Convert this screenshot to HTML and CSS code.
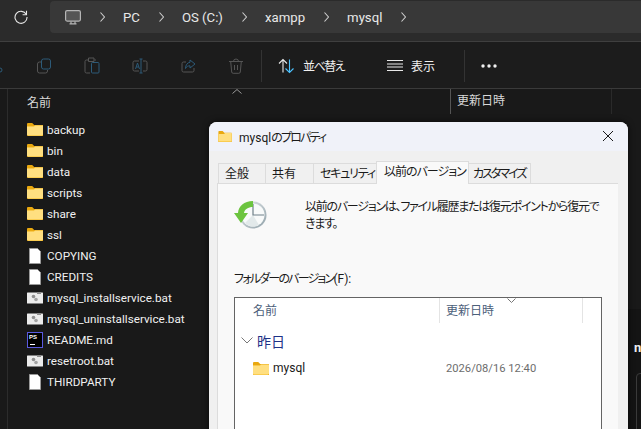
FILE: index.html
```html
<!DOCTYPE html>
<html lang="ja">
  <head>
    <meta charset="UTF-8" />
    <title>mysql</title>
    <link rel="stylesheet" href="styles.css">
  </head>
  <body>
    <svg class="defs" width="0" height="0">
      <symbol id="folder" viewBox="0 0 16 13">
        <path d="M0 1.2C0 .5.5 0 1.2 0h4l2 2H16v11H1.2C.5 13 0 12.500 0 11.800z" fill="#e9a80f"/>
        <path d="M0 3.500h16v8.300c0 .7-.5 1.200-1.200 1.200H1.200C.5 13 0 12.500 0 11.800z" fill="#f5b921"/>
        <path d="M0 3.500h7l1-1h8v8.800c0 .7-.5 1.200-1.200 1.200H1.200C.5 12.500 0 12 0 11.300z" fill="#ffdf80"/>
      </symbol>
      <symbol id="doc" viewBox="0 0 12 16">
        <path d="M.5.500h8l3 3v12H.5z" fill="#fff" stroke="#9a9a9a"/>
      </symbol>
      <symbol id="bat" viewBox="0 0 16 12">
        <rect width="16" height="11" y=".5" rx=".5" fill="#ececec"/>
        <rect x="10" width="4" height="2" y="0" fill="#8c8c8c"/>
        <circle cx="6.500" cy="4.500" r="1.800" fill="#8f8f8f"/>
        <circle cx="9" cy="7.500" r="1.800" fill="#a3a3a3"/>
      </symbol>
      <symbol id="chevron" viewBox="0 0 5 10">
        <path d="M.5.500L4.500 5 .5 9.500" fill="none" stroke="#cfcfcf" stroke-width="1.100"/>
      </symbol>
    </svg>

    <div class="explorer">
      <div class="address-strip">
        <svg class="refresh" width="14" height="14" viewBox="0 0 14 14" fill="none" stroke="#e8e8e8" stroke-width="1.100">
          <path d="M12.300 4.500A6 6 0 1 0 13 7"/>
          <path d="M12.500 .8v3.900H8.600"/>
        </svg>
        <div class="crumbs">
          <svg class="pc-icon" width="16" height="15" viewBox="0 0 16 15" fill="none" stroke="#b5b5b5" stroke-width="1.200">
            <rect x=".6" y=".6" width="14.800" height="10.500" rx="1.500" fill="#555"/>
            <path d="M4.500 13.800h7M6 11.500v2M10 11.500v2"/>
          </svg>
          <svg class="sep" width="5" height="10"><use href="#chevron"/></svg>
          <span>PC</span>
          <svg class="sep" width="5" height="10"><use href="#chevron"/></svg>
          <span>OS (C:)</span>
          <svg class="sep" width="5" height="10"><use href="#chevron"/></svg>
          <span>xampp</span>
          <svg class="sep" width="5" height="10"><use href="#chevron"/></svg>
          <span>mysql</span>
          <svg class="sep" width="5" height="10"><use href="#chevron"/></svg>
        </div>
      </div>

      <div class="toolbar">
        <svg class="tool tool-cut" width="3" height="16" viewBox="0 0 3 16" fill="none" stroke="#2c5a78">
          <circle cx="0" cy="12" r="2"/>
        </svg>
        <svg class="tool" width="16" height="16" viewBox="0 0 16 16" fill="none" stroke-width="1">
          <rect x="5.500" y="1" width="9" height="10" rx="2" stroke="#2c5a78"/>
          <path d="M5 4H3.500a2 2 0 0 0-2 2v7a2 2 0 0 0 2 2h6a2 2 0 0 0 2-2v-1" stroke="#555"/>
        </svg>
        <svg class="tool" width="16" height="17" viewBox="0 0 16 17" fill="none" stroke-width="1">
          <path d="M4 3H2.500A1.500 1.500 0 0 0 1 4.500v10A1.500 1.500 0 0 0 2.500 16H6M12 3h-1.500M4.500 1h5.500v3.500H4.500z" stroke="#555"/>
          <rect x="7.500" y="5.500" width="7.500" height="10.500" rx="1" stroke="#2c5a78"/>
        </svg>
        <svg class="tool" width="16" height="16" viewBox="0 0 16 16" fill="none" stroke-width="1">
          <path d="M7 3H2.500A1.500 1.500 0 0 0 1 4.500v7A1.500 1.500 0 0 0 2.500 13H7M11 3h2.500A1.500 1.500 0 0 1 15 4.500v7a1.500 1.500 0 0 1-1.500 1.500H11" stroke="#555"/>
          <path d="M7.500 1h3M9 1v14M7.500 15h3M3.500 11l2-6 2 6M4.300 9h2.500" stroke="#2c5a78"/>
        </svg>
        <svg class="tool" width="16" height="16" viewBox="0 0 16 16" fill="none" stroke-width="1">
          <path d="M14 10v2.500a1.500 1.500 0 0 1-1.500 1.500h-9A1.500 1.500 0 0 1 2 12.500v-7A1.500 1.500 0 0 1 3.500 4H6" stroke="#555"/>
          <path d="M10 2l5 4-5 4V7.800C8 7.800 6.500 8.500 5.500 10.500 5.500 7 7.500 4.500 10 4.300z" stroke="#2c5a78"/>
        </svg>
        <svg class="tool tool-last" width="16" height="16" viewBox="0 0 16 16" fill="none" stroke="#555" stroke-width="1">
          <path d="M1 3.500h14M5.500 3.500a2.500 2.500 0 0 1 5 0M2.700 3.500l1 10.500a1.500 1.500 0 0 0 1.500 1.300h5.600a1.500 1.500 0 0 0 1.500-1.300l1-10.500M6.500 7v5M9.500 7v5"/>
        </svg>
        <div class="tool-divider"></div>
        <button class="tool-button sort-button">
          <svg width="16" height="16" viewBox="0 0 16 16" fill="none" stroke-width="1.100">
            <path d="M5 14.500V1.500M1 5.500l4-4 4 4" stroke="#e8e8e8"/>
            <path d="M11.500 1.500v13M7.500 10.500l4 4 4-4" stroke="#4cc2ff"/>
          </svg>
          <span class="sort-label">並べ替え</span>
        </button>
        <button class="tool-button view-button">
          <svg width="16" height="11" viewBox="0 0 16 11" fill="none" stroke="#e8e8e8" stroke-width="1">
            <path d="M0 .5h16M0 4h16M0 7h16M0 10.500h16"/>
          </svg>
          表示
        </button>
        <div class="tool-divider"></div>
        <svg class="more" width="16" height="4" viewBox="0 0 16 4" fill="#f0f0f0">
          <circle cx="2" cy="2" r="1.700"/>
          <circle cx="8" cy="2" r="1.700"/>
          <circle cx="14" cy="2" r="1.700"/>
        </svg>
      </div>

      <div class="list-pane">
        <div class="list-header">
          <span class="col-name">名前</span>
          <svg class="sort-caret" width="10" height="5" viewBox="0 0 10 5" fill="none" stroke="#9a9a9a">
            <path d="M.5 4.500L5 .5l4.500 4"/>
          </svg>
          <span class="col-date">更新日時</span>
        </div>
        <ul class="file-list">
          <li><svg width="16" height="13"><use href="#folder"/></svg>backup</li>
          <li><svg width="16" height="13"><use href="#folder"/></svg>bin</li>
          <li><svg width="16" height="13"><use href="#folder"/></svg>data</li>
          <li><svg width="16" height="13"><use href="#folder"/></svg>scripts</li>
          <li><svg width="16" height="13"><use href="#folder"/></svg>share</li>
          <li><svg width="16" height="13"><use href="#folder"/></svg>ssl</li>
          <li><svg class="doc-icon" width="12" height="16"><use href="#doc"/></svg>COPYING</li>
          <li><svg class="doc-icon" width="12" height="16"><use href="#doc"/></svg>CREDITS</li>
          <li><svg width="16" height="12"><use href="#bat"/></svg>mysql_installservice.bat</li>
          <li><svg width="16" height="12"><use href="#bat"/></svg>mysql_uninstallservice.bat</li>
          <li><span class="ps-icon">PS</span>README.md</li>
          <li><svg width="16" height="12"><use href="#bat"/></svg>resetroot.bat</li>
          <li><svg class="doc-icon" width="12" height="16"><use href="#doc"/></svg>THIRDPARTY</li>
        </ul>
      </div>
    </div>

    <div class="behind-pane"></div>
    <div class="behind-text">n</div>
    <div class="behind-box"></div>

    <div class="dialog">
      <div class="dialog-title">
        <svg width="14" height="11" viewBox="0 0 16 13"><use href="#folder"/></svg>
        <span>mysql<span class="kana-title">のプロパティ</span></span>
        <svg class="close" width="10" height="10" viewBox="0 0 10 10" stroke="#1a1a1a" fill="none">
          <path d="M0 0l10 10M10 0L0 10"/>
        </svg>
      </div>
      <div class="tabs">
        <div class="tab tab-general">全般</div>
        <div class="tab tab-share">共有</div>
        <div class="tab tab-security">セキュリティ</div>
        <div class="tab tab-active">以前のバージョン</div>
        <div class="tab tab-custom">カスタマイズ</div>
      </div>
      <div class="panel">
        <div class="intro">
          <svg class="clock" width="34" height="30" viewBox="0 0 34 30">
            <defs>
              <linearGradient id="rim" x1="0" y1="0" x2="1" y2="1">
                <stop offset="0" stop-color="#e8eced"/>
                <stop offset="1" stop-color="#8fa0a8"/>
              </linearGradient>
            </defs>
            <circle cx="19" cy="15" r="13.500" fill="url(#rim)"/>
            <circle cx="19" cy="15" r="11.500" fill="#f8fafa"/>
            <path d="M19 15L11 23A11.500 11.500 0 0 0 25 25z" fill="#e2e9ea"/>
            <path d="M19 4v11h11" stroke="#6f8089" stroke-width="1.200" fill="none"/>
            <path d="M19 1C10 1 4.500 6 4 13H0l7 10 7-10h-4c.5-3.500 4-6 9-6z" fill="#6cc43f"/>
          </svg>
          <p>以前のバージョンは、ファイル履歴または復元ポイントから復元で<br>きます。</p>
        </div>
        <div class="versions-label"><span class="kana-label">フォルダーのバージョン</span>(F):</div>
        <div class="versions">
          <div class="versions-header">
            <span class="v-name">名前</span>
            <span class="v-date">更新日時</span>
            <svg class="v-caret" width="9" height="5" viewBox="0 0 9 5" fill="none" stroke="#777">
              <path d="M.5.500l4 4 4-4"/>
            </svg>
          </div>
          <div class="group">
            <svg width="12" height="7" viewBox="0 0 12 7" fill="none" stroke="#777">
              <path d="M.5.500L6 6l5.500-5.500"/>
            </svg>
            昨日
          </div>
          <div class="version-row">
            <span class="v-file"><svg width="16" height="13"><use href="#folder"/></svg>mysql</span>
            <span class="v-when">2026/08/16 12:40</span>
          </div>
        </div>
      </div>
    </div>
  </body>
</html>
```

FILE: styles.css
```css
* {
  box-sizing: border-box;
}
html,
body {
  height: 100%;
}
body {
  margin: 0;
  overflow: hidden;
  position: relative;
  background: #191919;
  font-family: Roboto, "Noto Sans CJK JP", sans-serif;
  font-feature-settings: "palt";
  font-size: 12px;
  color: #f0f0f0;
}
.defs {
  position: absolute;
}
.address-strip {
  height: 42px;
  background: #2b2b2b;
  border-bottom: 1px solid #3f3f3f;
  display: flex;
  align-items: flex-start;
  padding: 1px 0 0 14px;
}
.refresh {
  margin: 9px 22px 0 0;
  flex: none;
}
.crumbs {
  flex: 1;
  height: 32px;
  background: #383838;
  border-radius: 4px 0 0 4px;
  display: flex;
  align-items: center;
  padding-left: 15px;
  font-size: 13.200px;
  color: #e8e8e8;
}
.pc-icon {
  flex: none;
}
.sep {
  flex: none;
  margin: 0 18px 0 19px;
}
.toolbar {
  height: 47px;
  background: #1c1c1c;
  border-bottom: 1px solid #3a3a3a;
  display: flex;
  align-items: center;
  padding-top: 1px;
}
.tool {
  flex: none;
  margin-right: 32px;
}
.tool-cut {
  margin-right: 33px;
}
.tool-last {
  margin-right: 17px;
}
.tool-divider {
  width: 1px;
  height: 32px;
  background: #333;
}
.tool-button {
  display: flex;
  align-items: center;
  gap: 9px;
  padding: 0;
  border: 0;
  background: none;
  font: inherit;
  color: #f0f0f0;
}
.sort-button {
  margin-left: 16px;
  width: 109px;
}
.sort-label {
  letter-spacing: -1.500px;
}
.view-button {
  width: 77px;
  gap: 8px;
}
.more {
  margin-left: 16px;
}
.list-pane {
  margin-left: 7px;
  border-left: 1px solid #2c2c2c;
  height: 340px;
}
.list-header {
  height: 25px;
  width: 604px;
  display: flex;
  align-items: center;
  position: relative;
  padding-left: 19px;
  color: #d8d8d8;
  border-right: 1px solid #2a2a2a;
}
.col-name {
  width: 423px;
}
.sort-caret {
  position: absolute;
  left: 224px;
  top: 0;
}
.col-date {
  border-left: 1px solid #555;
  height: 25px;
  line-height: 25px;
  padding-left: 6px;
}
.file-list {
  list-style: none;
  margin: 5px 0 0;
  padding: 0 0 0 19px;
  font-size: 11.700px;
}
.file-list li {
  height: 21px;
  display: flex;
  align-items: center;
  gap: 4px;
  white-space: nowrap;
}
.file-list svg {
  flex: none;
}
.doc-icon {
  margin: 0 2px;
}
.ps-icon {
  width: 16px;
  height: 16px;
  flex: none;
  background: #000;
  border: 1px solid #5a5ae0;
  font: bold 6px/8px "Liberation Sans", sans-serif;
  padding-left: 1px;
  color: #fff;
  position: relative;
}
.ps-icon::after {
  content: "";
  position: absolute;
  left: 2px;
  bottom: 2px;
  width: 5px;
  height: 1px;
  background: #fff;
}
.behind-pane {
  position: absolute;
  left: 628px;
  top: 309px;
  width: 13px;
  height: 120px;
  background: #141414;
}
.behind-text {
  position: absolute;
  left: 634px;
  top: 340px;
  font: bold 13px Roboto, sans-serif;
  color: #eee;
}
.behind-box {
  position: absolute;
  left: 636px;
  top: 373px;
  width: 20px;
  height: 60px;
  border: 1px solid #3a3a3a;
  border-radius: 4px;
}
.dialog {
  position: absolute;
  left: 209px;
  top: 122px;
  width: 419px;
  height: 320px;
  background: #f0f0f0;
  border-radius: 8px 8px 0 0;
  box-shadow: 0 0 6px rgba(0, 0, 0, 0.7);
  color: #1a1a1a;
  display: flex;
  flex-direction: column;
}
.dialog-title {
  height: 29px;
  flex: none;
  background: #f0f2f9;
  border-radius: 8px 8px 0 0;
  display: flex;
  align-items: center;
  gap: 7px;
  padding-left: 9px;
  position: relative;
}
.kana-title {
  letter-spacing: -1.800px;
}
.close {
  position: absolute;
  right: 15px;
  top: 9px;
}
.tabs {
  flex: none;
  display: flex;
  align-items: flex-end;
  height: 33px;
  padding-left: 9px;
  margin-bottom: -1px;
}
.tab {
  height: 21px;
  padding-left: 6px;
  line-height: 20px;
  background: #f0f0f0;
  border: 1px solid #dcdcdc;
  border-bottom: 0;
  margin-right: -1px;
  white-space: nowrap;
}
.tab-general {
  width: 48px;
}
.tab-share {
  width: 49px;
}
.tab-security {
  width: 64px;
  letter-spacing: -1.200px;
}
.tab-active {
  width: 93px;
  height: 23px;
  padding-left: 7px;
  background: #f9f9f9;
  position: relative;
  z-index: 1;
  letter-spacing: -1px;
}
.tab-custom {
  width: 63px;
  padding-left: 4px;
  letter-spacing: -2px;
}
.panel {
  margin: 0 10px 0 8px;
  flex: 1;
  background: #f9f9f9;
  border: 1px solid #dcdcdc;
  border-right: 0;
  padding: 0 16px;
}
.intro {
  display: flex;
  align-items: flex-start;
  height: 85px;
  padding-top: 15px;
}
.clock {
  flex: none;
  margin: 1px 37px 0 0;
}
.intro p {
  margin: 0;
  line-height: 17px;
  white-space: nowrap;
  letter-spacing: -1.250px;
}
.versions-label {
  height: 28px;
}
.kana-label {
  letter-spacing: -1.800px;
}
.versions {
  width: 368px;
  height: 150px;
  background: #fff;
  border: 1px solid #646464;
}
.versions-header {
  height: 25px;
  display: flex;
  position: relative;
  color: #4c607a;
}
.v-name {
  width: 204px;
  padding-left: 18px;
  line-height: 26px;
}
.v-date {
  width: 144px;
  padding-left: 6px;
  line-height: 26px;
  border-left: 1px solid #e4e4e4;
  border-right: 1px solid #e4e4e4;
}
.v-caret {
  position: absolute;
  left: 272px;
  top: 0;
}
.group {
  display: flex;
  align-items: center;
  gap: 4px;
  height: 35px;
  padding-left: 6px;
  font-size: 14px;
  color: #1e3287;
}
.version-row {
  display: flex;
  align-items: center;
  height: 20px;
  padding-left: 18px;
}
.v-file {
  width: 193px;
  display: flex;
  align-items: center;
  gap: 4px;
}
.v-when {
  color: #6d6d6d;
  font-size: 11.200px;
}
```
